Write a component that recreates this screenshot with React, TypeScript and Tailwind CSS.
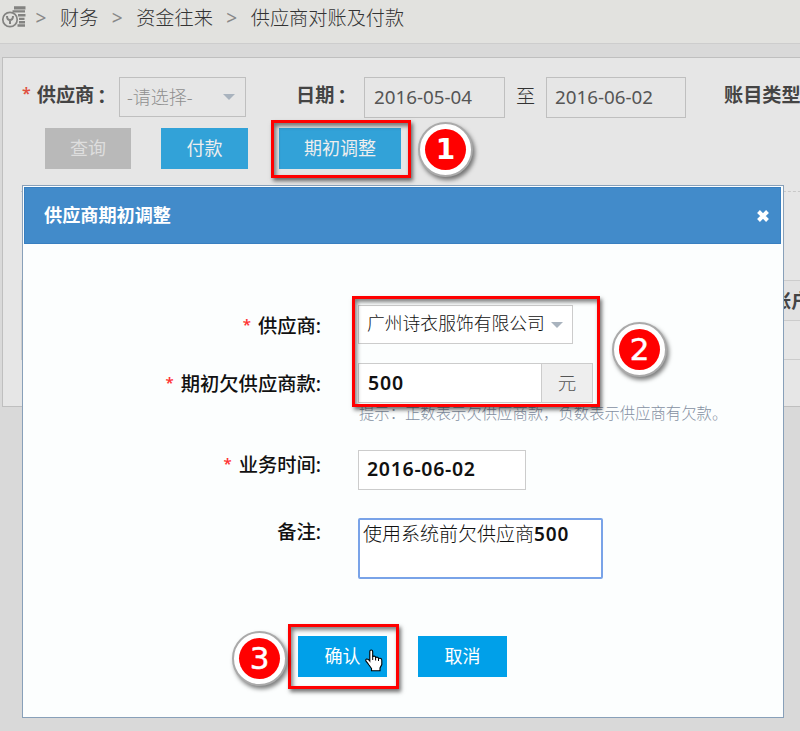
import React from 'react';

const crumbs = ['财务', '资金往来', '供应商对账及付款'];

const CoinIcon = () => (
    <svg width="26" height="24" viewBox="0 0 26 24" className="shrink-0" fill="none">
        <path
            d="M14 .2h11.500v3.200H14zM12.500 4.200h12.500v2.400h-12.500zM18 8h7.500v2.600H18zM19 11.800h5.500v2.200H19zM19 15h6v2.400h-6zM17.500 18.200h7.500v2.500h-7.500z"
            fill="#838381"
        />
        <circle cx="10" cy="13.500" r="7.200" stroke="#838381" strokeWidth="1.700" />
        <path d="M7 10c0 3 1 4 3 4s3-1 3-4M10 13.500V18" stroke="#838381" strokeWidth="2" />
    </svg>
);

const Caret = ({ className = '' }: { className?: string }) => (
    <svg width="12" height="6" viewBox="0 0 12 6" className={`shrink-0 ${className}`}>
        <path d="M0 0h12L6 6z" fill="#a9b3be" />
    </svg>
);

const HandCursor = () => (
    <svg width="18" height="23" viewBox="0 0 18 23" className="absolute left-[365px] top-[649px]">
        <path
            d="M4.800 2.600Q4.800 1 6.200 1T7.700 2.600V7.500Q10.300 6.500 10.600 8.500 13 7.500 13.500 9.500 16.800 8.500 16.800 11.500V15.500L15 19V21.800H6.500V19.500Q5 17.500 3.800 15.800 2.500 13.800 1 12.200.2 10.600 1.700 10 3.200 9.800 4.800 12z"
            fill="#fff"
            stroke="#000"
            strokeWidth="1.100"
        />
        <path d="M7.700 7.500v3.500M10.600 8.500v3M13.500 9.500v2.500" stroke="#000" strokeWidth="1" />
    </svg>
);

interface FormRowProps {
    label: string;
    required?: boolean;
    className?: string;
    labelClass?: string;
    children: React.ReactNode;
}

const FormRow = ({ label, required, className = '', labelClass = '', children }: FormRowProps) => (
    <div className={`flex ${className}`}>
        <div className={`mr-[37px] flex w-[298px] shrink-0 justify-end text-[19.300px] font-medium leading-7 text-[#111] ${labelClass}`}>
            {required && <span className="-mt-0.5 mr-[7px] text-[15px] font-semibold text-[#f33]">*</span>}
            {label}
        </div>
        {children}
    </div>
);

const Badge = ({ value, className, digitClass }: { value: number; className: string; digitClass: string }) => (
    <div className={`absolute flex size-[55px] items-center justify-center rounded-full border-2 border-[#aaa] bg-white shadow-[2px_3px_4px_rgba(0,0,0,0.5)] ${className}`}>
        <div className={`flex size-[41px] items-center justify-center rounded-full bg-[#f00] font-['DejaVu_Sans',sans-serif] leading-none text-white ${digitClass}`}>
            {value}
        </div>
    </div>
);

const Highlight = ({ className }: { className: string }) => (
    <div className={`absolute border-[3px] border-[#f00] shadow-[2px_3px_4px_rgba(0,0,0,0.55),inset_2px_3px_4px_rgba(0,0,0,0.5)] ${className}`} />
);

// full-width colon centred in its cell
const Colon = () => <span className="relative top-0.5 -left-[2px] font-['Noto_Sans_CJK_TC',sans-serif] leading-none">：</span>;

const AdjustDialog = () => (
    <div className="absolute left-[22px] top-[185px] h-[533px] w-[762px] border border-[#88a0b9] bg-[#fcfefe] pt-px">
        <div className="mr-[2px] ml-px flex h-[57px] items-center justify-between border border-[#387fc0] bg-[#428bca] pr-[10px] pl-[19px] text-white">
            <h2 className="text-[18.150px] font-bold">供应商期初调整</h2>
            <button aria-label="关闭">
                <svg width="14" height="14" viewBox="0 0 14 14">
                    <path d="M2.500 2.500l9 9M11.500 2.500l-9 9" stroke="#fff" strokeWidth="4" />
                </svg>
            </button>
        </div>

        <div className="pt-[61px]">
            <FormRow label="供应商:" required labelClass="pt-[7px]">
                <div className="flex h-[39px] w-[215px] items-center border border-[#ccc] bg-white pl-[8px] text-[17.800px] text-[#111]">
                    <span className="-mt-0.5 font-light whitespace-nowrap">广州诗衣服饰有限公司</span>
                    <Caret className="ml-[6px]" />
                </div>
            </FormRow>

            <FormRow label="期初欠供应商款:" required className="mt-[19px]" labelClass="pt-[7px]">
                <div className="flex h-[40px] w-[235px] border border-[#ccc] bg-white text-[#111]">
                    <div className="flex flex-1 items-center pl-[9px] text-[19.500px] font-semibold tracking-[0.800px]">500</div>
                    <div className="flex w-[51px] items-center justify-center border-l border-[#ccc] bg-[#eee] pb-px text-[18.500px] font-light text-[#555]">元</div>
                </div>
            </FormRow>
            <p className="ml-[336px] h-[19px] whitespace-nowrap text-[15.350px] leading-[20px] font-light text-[#8590a2]">
                提示：正数表示欠供应商款，负数表示供应商有欠款。
            </p>

            <FormRow label="业务时间:" required className="mt-[28px]" labelClass="pt-[1px]">
                <div className="flex h-[40px] w-[168px] items-center border border-[#ccc] bg-white pb-[2px] pl-2 text-[19.500px] font-semibold tracking-[0.700px] text-[#111]">
                    2016-06-02
                </div>
            </FormRow>

            <FormRow label="备注:" className="mt-[28px]">
                <div className="h-[61px] w-[245px] rounded-[2px] border-2 border-[#79a3e8] bg-white pl-[3px] text-[19px] leading-[29px] font-light text-[#111]">
                    使用系统前欠供应商<b className="font-semibold tracking-[0.900px]">500</b>
                </div>
            </FormRow>

            <div className="mt-[57px] ml-[275px] flex gap-[31px] text-[18px] text-white">
                <button className="h-[41px] w-[89px] bg-[#00a0e9]">确认</button>
                <button className="h-[41px] w-[89px] bg-[#00a0e9]">取消</button>
            </div>
        </div>
    </div>
);

export default function App() {
    return (
        <div className="relative h-[731px] w-[800px] overflow-hidden bg-[#d9d9d9] font-['Noto_Sans','Noto_Sans_CJK_SC',sans-serif] text-[#444]">
            <nav className="flex h-11 items-center border-b border-[#cdcdcd] bg-[#e2e2df] pb-[7px] text-[19.200px]">
                <CoinIcon />
                {crumbs.map((crumb) => (
                    <React.Fragment key={crumb}>
                        <span className="w-[34px] shrink-0 pr-1 text-center text-[19px] text-[#888]">&gt;</span>
                        <span className="mr-[3.800px] font-light whitespace-nowrap text-[#333]">{crumb}</span>
                    </React.Fragment>
                ))}
            </nav>

            {/* filter panel */}
            <section className="mt-[13px] ml-[2px] h-[350px] w-[830px] border border-[#bfbfbf] bg-[#e6e6e6]">
                <div className="flex h-[60px] items-end text-[19.200px] whitespace-nowrap">
                    <label className="ml-[19px] w-[97px] pb-[8px] font-bold">
                        <span className="relative -top-[3px] mr-[6px] text-[16px] font-semibold text-[#e05040]">*</span>供应商<Colon />
                    </label>
                    <div className="mb-px flex h-10 w-[127px] items-center justify-between border border-[#bfbfbf] pr-[10px] pl-[7px] text-[18px] font-light text-[#8f8f8f]">
                        -请选择-
                        <Caret />
                    </div>
                    <label className="ml-[50px] w-[68px] pb-[8px] font-bold">日期<Colon /></label>
                    <div className="flex h-[41px] w-[141px] items-center border border-[#bfbfbf] pl-[9px] text-[18.800px] text-[#555]">2016-05-04</div>
                    <span className="w-[41px] pb-[7px] text-center font-light text-[#333]">至</span>
                    <div className="flex h-[41px] w-[140px] items-center border border-[#bfbfbf] pl-2 text-[18.800px] text-[#555]">2016-06-02</div>
                    <label className="ml-[38px] pb-[8px] font-bold">账目类型</label>
                </div>
                <div className="mt-[10px] ml-[42px] flex text-[18px] text-[#eee]">
                    <button className="h-[41px] w-[86px] bg-[#b9b9b9] text-[#dedede]">查询</button>
                    <button className="ml-[30px] h-[41px] w-[87px] bg-[#32a2d8]">付款</button>
                    <button className="ml-[31px] h-[41px] w-[122px] bg-[#32a2d8]">期初调整</button>
                </div>
                <div className="mt-[22px] ml-[18px] border-t border-dashed border-[#c8c8c8]" />
                <div className="mt-[88px] ml-[18px] h-[41px] border-y border-l border-[#ccc] bg-[#e2e2e2] pl-[750px] text-[19.200px] leading-[40px] font-bold whitespace-nowrap">
                    账户
                </div>
                <div className="ml-[18px] h-[39px] border-b border-l border-[#ccc]" />
            </section>

            <AdjustDialog />

            <Highlight className="left-[271px] top-[120px] h-[58px] w-[140px]" />
            <Highlight className="left-[352px] top-[296px] h-[111px] w-[248px]" />
            <Highlight className="left-[288px] top-[624px] h-[65px] w-[111px]" />
            <Badge value={1} className="left-[418px] top-[122px]" digitClass="text-[28px] font-bold" />
            <Badge value={2} className="left-[612px] top-[322px]" digitClass="text-[31px] [-webkit-text-stroke:0.5px_white]" />
            <Badge value={3} className="left-[232px] top-[631px]" digitClass="text-[31px] [-webkit-text-stroke:0.5px_white]" />
            <HandCursor />
        </div>
    );
}
